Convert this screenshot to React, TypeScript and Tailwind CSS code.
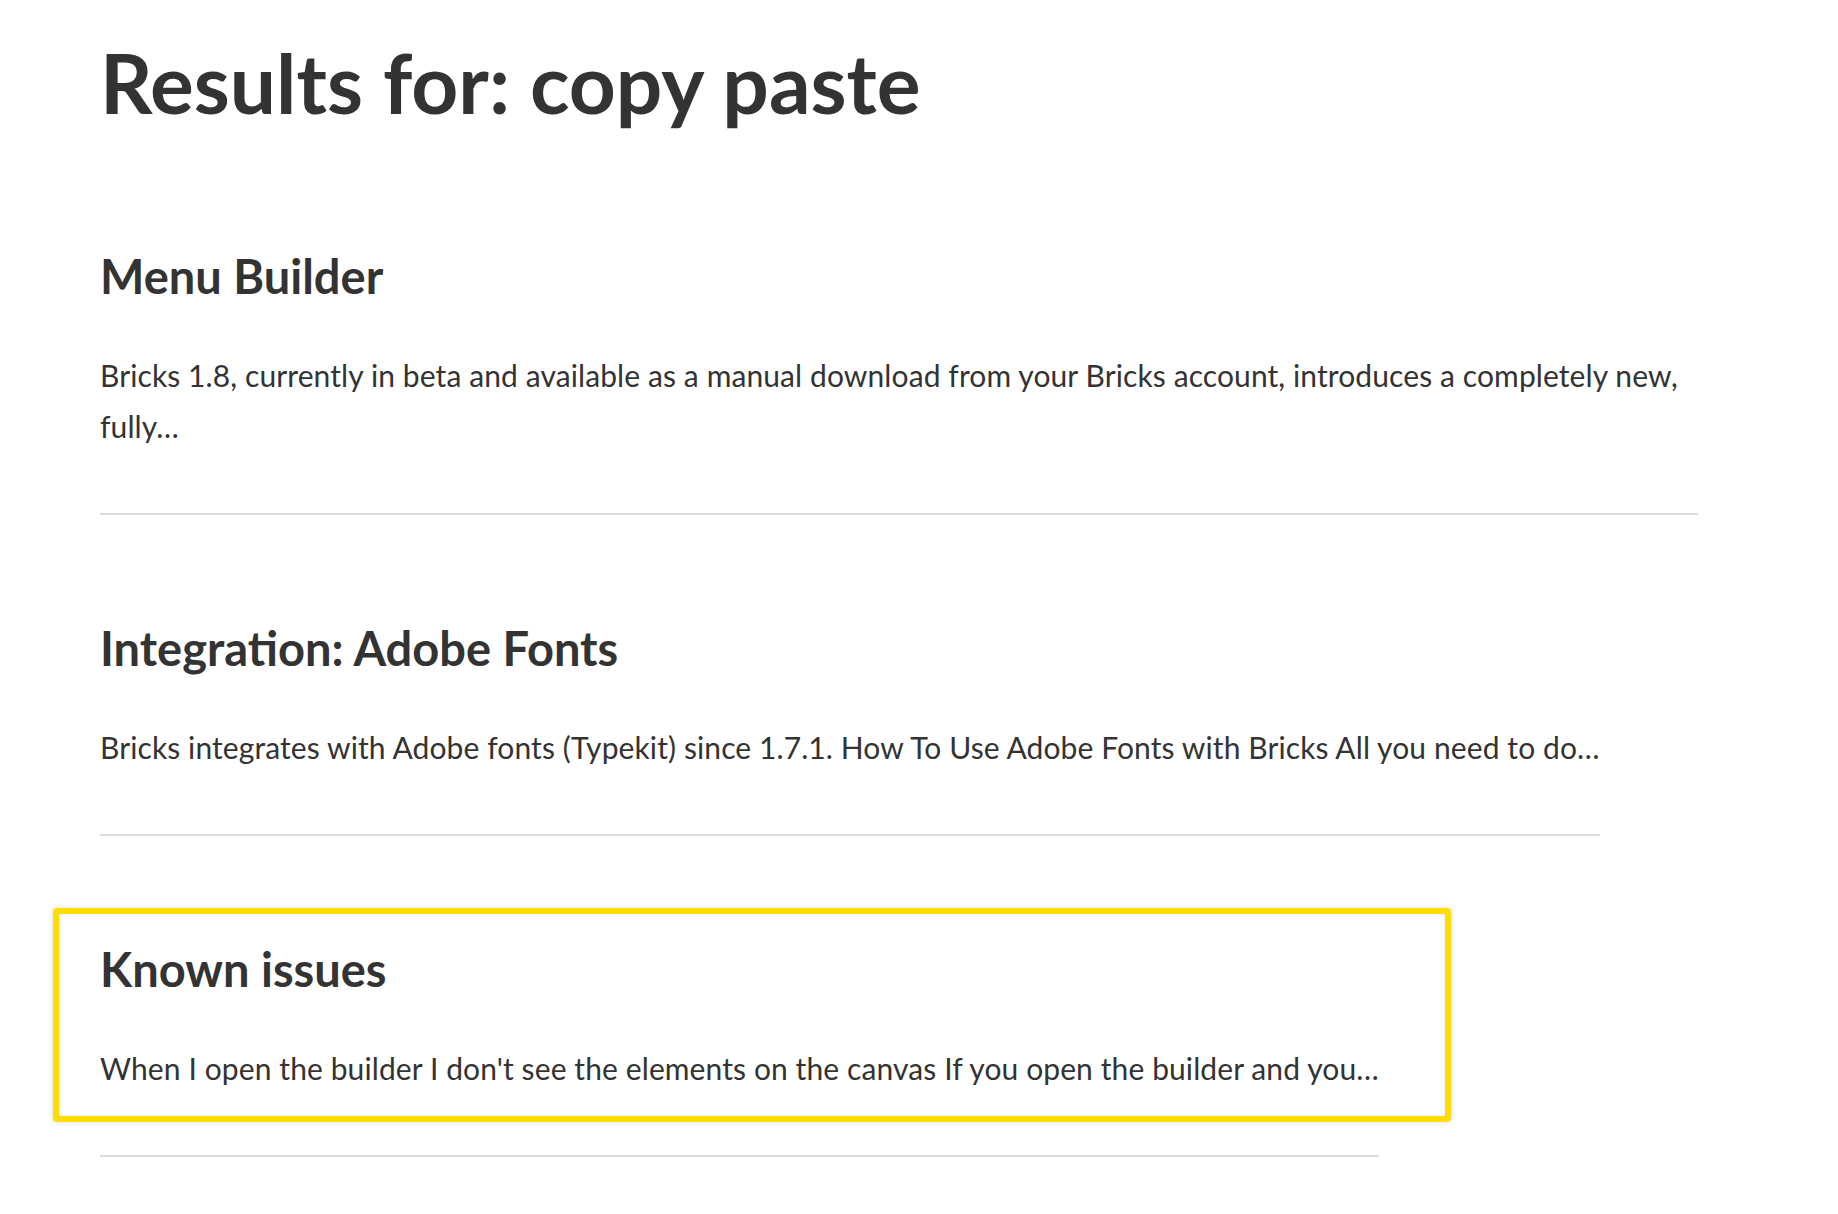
import React from "react";

interface Result {
  title: string;
  excerpt: string;
  highlight?: boolean;
}

const results: Result[] = [
  {
    title: "Menu Builder",
    excerpt:
      "Bricks 1.8, currently in beta and available as a manual download from your Bricks account, introduces a completely new, fully…",
  },
  {
    title: "Integration: Adobe Fonts",
    excerpt:
      "Bricks integrates with Adobe fonts (Typekit) since 1.7.1. How To Use Adobe Fonts with Bricks All you need to do…",
  },
  {
    title: "Known issues",
    excerpt:
      "When I open the builder I don't see the elements on the canvas If you open the builder and you…",
    highlight: true,
  },
];

const App: React.FC = () => {
  return (
    <div
      className="min-h-screen bg-white text-[#333] pl-[100px] pt-[41px]"
      style={{ fontFamily: "Lato, 'Noto Sans', sans-serif" }}
    >
      <h1 className="text-[82px] leading-[82px] font-bold">
        Results for: copy paste
      </h1>
      <div className="w-[1598px] flex flex-col items-start mt-[125px]">
        {results.map((item, index) => (
          <article
            key={index}
            className={`relative max-w-full border-b-2 border-[#dcdcdc] pb-[61px] ${
              index > 0 ? "mt-[105px]" : ""
            }`}
          >
            {item.highlight && (
              <div className="absolute top-[-33px] left-[-47px] w-[1398px] h-[214px] rounded-[4px] border-[6px] border-[#ffdd00] shadow-[0_0_5px_rgba(0,0,0,0.15),inset_0_0_4px_rgba(0,0,0,0.1)] pointer-events-none" />
            )}
            <h3 className="text-[47px] leading-[56px] font-bold">
              {item.title}
            </h3>
            <p className="text-[30px] leading-[51px] tracking-[0.1px] mt-[46px]">
              {item.excerpt}
            </p>
          </article>
        ))}
      </div>
    </div>
  );
};

export default App;
